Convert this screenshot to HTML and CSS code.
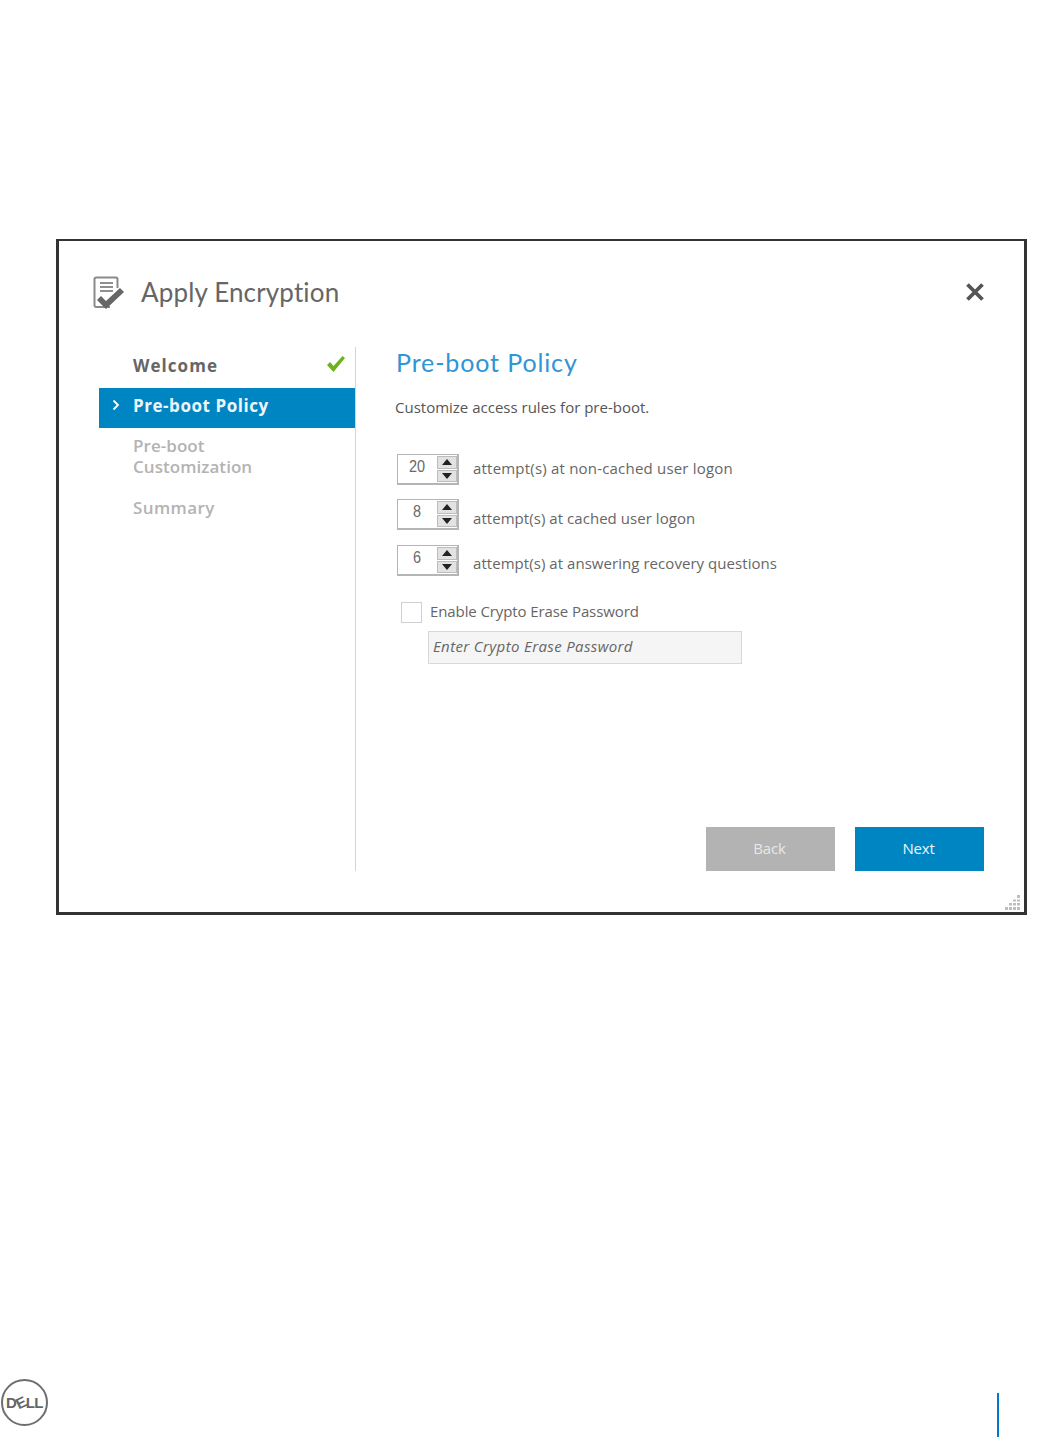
FILE: index.html
```html
<!DOCTYPE html>
<html lang="en">
<head>
<meta charset="utf-8">
<title>Apply Encryption</title>
<link rel="stylesheet" href="styles.css">
</head>
<body>
<main class="page">
  <section class="dialog">
    <header class="dialog-head">
      <svg class="doc-icon" width="32" height="34" viewBox="0 0 32 34">
        <path d="M17 31H3a1.500 1.500 0 0 1-1.500-1.500V3A1.500 1.500 0 0 1 3 1.500h20A1.500 1.500 0 0 1 24.500 3v9" fill="none" stroke="#8a8a8a" stroke-width="2"/>
        <path d="M7 7h13M7 11h13M7 15h13" stroke="#8f8f8f" stroke-width="2"/>
        <path d="M4 24l4-4 5 5L27 12l4 4-18 17z" fill="#666"/>
      </svg>
      <h1 class="dialog-title">Apply Encryption</h1>
      <svg class="close-icon" width="20" height="20" viewBox="0 0 20 20">
        <path d="M2.500 2.500l15 15M17.500 2.500l-15 15" stroke="#555" stroke-width="3.800"/>
      </svg>
    </header>
    <div class="dialog-body">
      <nav class="steps">
        <div class="step step-done">
          <span>Welcome</span>
          <svg class="check-icon" width="20" height="18" viewBox="0 0 20 18"><path d="M1 10l3-3 3.500 4L16.500 1 19 3 7.500 17z" fill="#6cb31d"/></svg>
        </div>
        <div class="step step-active">
          <svg class="chevron" width="8" height="12" viewBox="0 0 8 12"><path d="M1.500 1.500L6 6l-4.500 4.500" fill="none" stroke="#fff" stroke-width="1.800"/></svg>
          <span>Pre-boot Policy</span>
        </div>
        <div class="step step-todo step-wrap">Pre-boot<br>Customization</div>
        <div class="step step-todo step-last">Summary</div>
      </nav>
      <div class="content">
        <h2 class="content-title">Pre-boot Policy</h2>
        <p class="intro">Customize access rules for pre-boot.</p>
        <div class="spin-row row-a">
          <div class="spinner"><span class="spin-value">20</span><span class="spin-btns"><i class="up"></i><i class="down"></i></span></div>
          <span class="spin-label label-a">attempt(s) at non-cached user logon</span>
        </div>
        <div class="spin-row row-b">
          <div class="spinner"><span class="spin-value">8</span><span class="spin-btns"><i class="up"></i><i class="down"></i></span></div>
          <span class="spin-label label-b">attempt(s) at cached user logon</span>
        </div>
        <div class="spin-row row-c">
          <div class="spinner"><span class="spin-value">6</span><span class="spin-btns"><i class="up"></i><i class="down"></i></span></div>
          <span class="spin-label label-b">attempt(s) at answering recovery questions</span>
        </div>
        <div class="check-row"><span class="checkbox"></span><span class="check-label">Enable Crypto Erase Password</span></div>
        <div class="password-field">Enter Crypto Erase Password</div>
        <div class="actions">
          <button class="btn btn-off" type="button">Back</button>
          <button class="btn btn-on" type="button">Next</button>
        </div>
      </div>
    </div>
    <svg class="grip" width="16" height="16" viewBox="0 0 16 16" fill="#bdbdbd">
      <rect x="12" y="1" width="3" height="3"/><rect x="8" y="5.500" width="3" height="2"/><rect x="12" y="5.500" width="3" height="2"/><rect x="4" y="9" width="3" height="2.500"/><rect x="8" y="9" width="3" height="2.500"/><rect x="12" y="9" width="3" height="2.500"/><rect x="0" y="13" width="3" height="3"/><rect x="4" y="13" width="3" height="3"/><rect x="8" y="13" width="3" height="3"/><rect x="12" y="13" width="3" height="3"/>
    </svg>
  </section>
  <footer class="page-foot">
    <div class="dell-logo"><span class="dell-text">D<span class="dell-e">E</span>LL</span></div>
    <div class="page-rule"></div>
  </footer>
</main>
</body>
</html>
```
FILE: styles.css
```css
* { box-sizing: border-box; }
html, body { margin: 0; height: 100%; background: #fff; }
body { font-family: "Open Sans", "Noto Sans", sans-serif; color: #555; overflow: hidden; }
.page { height: 1438px; display: flex; flex-direction: column; justify-content: space-between; padding-top: 239px; }
.dialog { position: relative; width: 971px; height: 676px; margin-left: 56px; border: 3px solid #333; border-top-width: 2px; background: #fff; }
.dialog-head { display: flex; align-items: center; height: 104px; padding: 0 39px 2px 34px; }
.doc-icon { flex: none; margin-top: 2px; }
.dialog-title { flex: 1; margin: 0 0 0 16px; font: 400 26px/32px Lato, sans-serif; letter-spacing: .15px; color: #666; }
.close-icon { flex: none; }
.dialog-body { display: flex; align-items: stretch; height: 526px; padding-left: 40px; padding-top: 2px; }
.steps { width: 257px; flex: none; border-right: 1px solid #d4d4d4; font: 700 17px/21px "Open Sans", sans-serif; }
.step { display: flex; align-items: center; min-height: 40px; padding-left: 34px; width: 256px; }
.step-done { color: #666; justify-content: space-between; padding-right: 9px; height: 41px; padding-bottom: 5px; letter-spacing: 1.05px; }
.check-icon { margin-bottom: 3px; }
.step-active { position: relative; color: #eef6fb; background: #0085c3; padding-bottom: 5px; letter-spacing: .55px; }
.chevron { position: absolute; left: 13px; top: 11px; }
.step-todo { color: #b3b3b3; font-weight: 600; }
.step-wrap { display: block; padding-top: 7px; height: 59px; letter-spacing: .05px; }
.step-last { min-height: 0; padding-top: 10px; letter-spacing: .4px; }
.content { flex: 1; padding-left: 40px; position: relative; }
.content-title { margin: 0; font: 400 25px/30px Lato, sans-serif; color: #2f95d4; letter-spacing: .87px; }
.intro { margin: 20px 0 0 -1px; font-size: 15px; line-height: 20px; color: #555; }
.spin-row { display: flex; align-items: flex-start; }
.row-a { margin-top: 37px; }
.row-b { margin-top: 14px; }
.row-c { margin-top: 15px; }
.spinner { width: 62px; height: 31px; margin: 0 1px 0 1px; border: 1px solid #b5b5b5; display: flex; flex: none; justify-content: space-between; padding: 1px 0 0 0; border-right-width: 2px; border-bottom-width: 2px; }
.spin-value { width: 38px; text-align: center; font: 400 17px/22px "Liberation Sans", sans-serif; transform: scaleX(.85); color: #6a6a6a; }
.spin-btns { width: 20px; height: 26px; display: flex; flex-direction: column; gap: 1px; }
.spin-btns i { flex: 1; display: flex; align-items: center; justify-content: center; background: #e2e2e2; border: 1px solid #bdbdbd; }
.spin-btns i::before { content: ""; border-left: 5px solid transparent; border-right: 5px solid transparent; }
.up::before { border-bottom: 6px solid #222; }
.down::before { border-top: 6px solid #222; }
.spin-label { margin-left: 13px; font-size: 15px; line-height: 20px; letter-spacing: .05px; color: #666; }
.label-a { padding-top: 4px; letter-spacing: .2px; }
.label-b { padding-top: 9px; }
.row-c .label-b { padding-top: 8px; }
.check-row { display: flex; align-items: center; margin: 25px 0 0 5px; }
.checkbox { width: 21px; height: 21px; border: 1px solid #d0d0d0; flex: none; }
.check-label { margin: 0 0 2px 8px; font-size: 15px; line-height: 20px; letter-spacing: -.1px; color: #666; }
.password-field { width: 314px; height: 33px; margin: 8px 0 0 32px; padding: 0 4px; background: #f5f5f5; border: 1px solid #d8d8d8; font-style: italic; font-size: 15px; line-height: 28px; letter-spacing: .37px; color: #666; }
.actions { position: absolute; right: 40px; bottom: 0; display: flex; gap: 20px; }
.btn { width: 129px; height: 44px; border: 0; padding: 0 2px 2px 0; font: 400 15px "Open Sans", sans-serif; letter-spacing: -.2px; }
.btn-off { background: #b3b3b3; color: #e8e8e8; }
.btn-on { background: #0085c3; color: #eaf5fb; }
.grip { position: absolute; right: 3px; bottom: 2px; }
.page-foot { display: flex; justify-content: space-between; align-items: flex-end; padding-right: 46px; height: 60px; }
.dell-logo { width: 47px; height: 47px; margin: 0 0 12px 1px; border: 2.500px solid #6e6e6e; border-radius: 50%; display: flex; align-items: center; justify-content: center; }
.dell-text { font: 700 15px/1 "Liberation Sans", sans-serif; color: #666; letter-spacing: -.6px; }
.dell-e { display: inline-block; transform: rotate(-25deg); }
.page-rule { width: 2px; height: 44px; margin-bottom: 1px; background: #0076ce; }
```
